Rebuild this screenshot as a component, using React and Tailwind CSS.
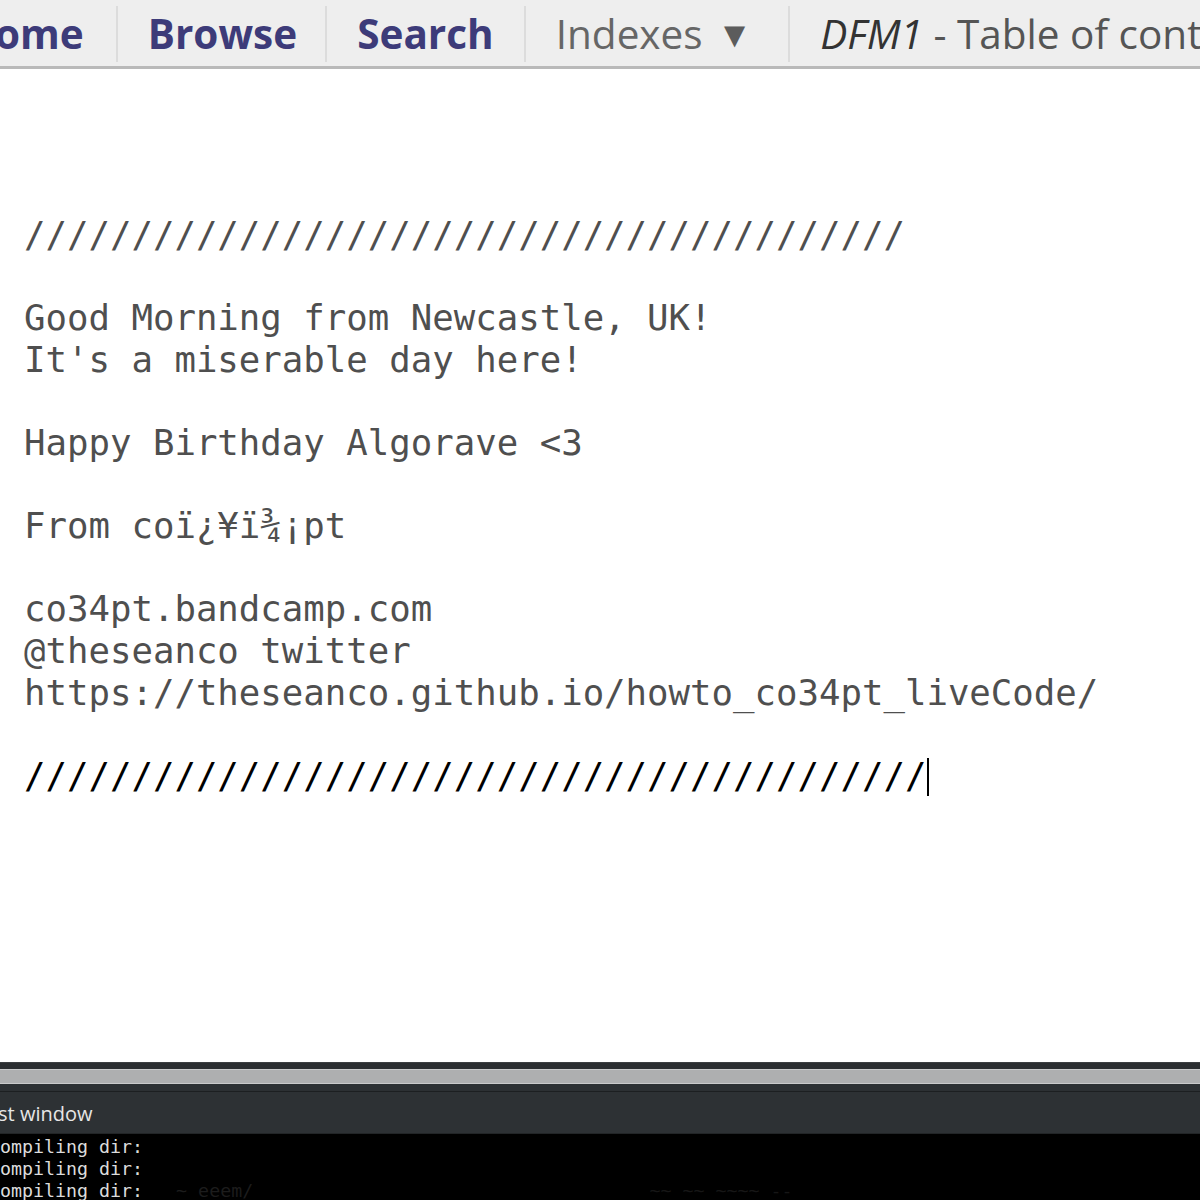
import React from "react";

const mono = { fontFamily: '"DejaVu Sans Mono", monospace' };
const sans = { fontFamily: '"Open Sans", "Noto Sans", sans-serif' };

function Sep() {
  return <div className="w-[2px] h-[56px] bg-[#dcdcdc] shrink-0" />;
}

export default function App() {
  return (
    <div className="w-[1200px] h-[1200px] overflow-hidden bg-white flex flex-col">
      {/* Top nav */}
      <div
        className="h-[69px] shrink-0 bg-[#eeeeee] border-b-[3px] border-[#b9b9b9] flex items-center overflow-hidden whitespace-nowrap text-[40.5px] leading-none"
        style={sans}
      >
        <div className="flex items-center -ml-[36px] pt-[2px]">
          <span className="font-bold text-[#3d3b79] pr-[32px]">Home</span>
          <Sep />
          <span className="font-bold text-[#3d3b79] pl-[30px] pr-[28px]">Browse</span>
          <Sep />
          <span className="font-bold text-[#3d3b79] px-[30px]">Search</span>
          <Sep />
          <span className="text-[#666666] pl-[30px] pr-[36px] flex items-center">
            Indexes
            <span className="ml-[14px] text-[36px] text-[#5c5c5c]">▼</span>
          </span>
          <Sep />
          <span className="pl-[30px] text-[#555555]">
            <i className="text-[#333333]">DFM1</i> - Table of contents
          </span>
        </div>
      </div>

      {/* Editor */}
      <div className="h-[993px] shrink-0 bg-white pl-[24px] pt-[145px] overflow-hidden">
        <pre
          className="m-0 text-[35.7px] leading-[41.6px] text-[#4f4f4f] whitespace-pre"
          style={mono}
        >
{`/////////////////////////////////////////

Good Morning from Newcastle, UK!
It's a miserable day here!

Happy Birthday Algorave <3

From coï¿¥ï¾¡pt

co34pt.bandcamp.com
@theseanco twitter
https://theseanco.github.io/howto_co34pt_liveCode/

`}
          <span className="text-black">//////////////////////////////////////////</span>
          <span className="inline-block w-[2px] h-[38px] bg-black align-[-8px] ml-[1px]" />
        </pre>
      </div>

      {/* Bottom bars */}
      <div className="h-[7px] shrink-0 bg-[#2b2e31] border-t border-[#3c3f42]" />
      <div className="h-[15px] shrink-0 bg-[#aeafb0] border-t border-b border-[#c9cacb]" />
      <div className="h-[8px] shrink-0 bg-[#2c3033] border-b border-[#1c1f21]" />
      <div
        className="h-[42px] shrink-0 bg-[#2d3134] flex items-center text-[20px] text-[#e6e6e6] overflow-hidden whitespace-nowrap border-b border-[#222527]"
        style={sans}
      >
        <span className="-ml-[26px] pt-[2px]">Post window</span>
      </div>
      <div className="flex-1 bg-black overflow-hidden pt-[2px]">
        <pre
          className="m-0 text-[18.3px] leading-[22px] text-[#dcdcdc] -ml-[11px] whitespace-pre"
          style={mono}
        >
{`Compiling dir:
Compiling dir:
Compiling dir:`}
          <span className="text-[#1c1c1c]">{"   ~ eeem/          "}</span>
          <span className="text-[#161616]">{"                          ~~ ~~ ~~~~ --"}</span>
        </pre>
      </div>
    </div>
  );
}
